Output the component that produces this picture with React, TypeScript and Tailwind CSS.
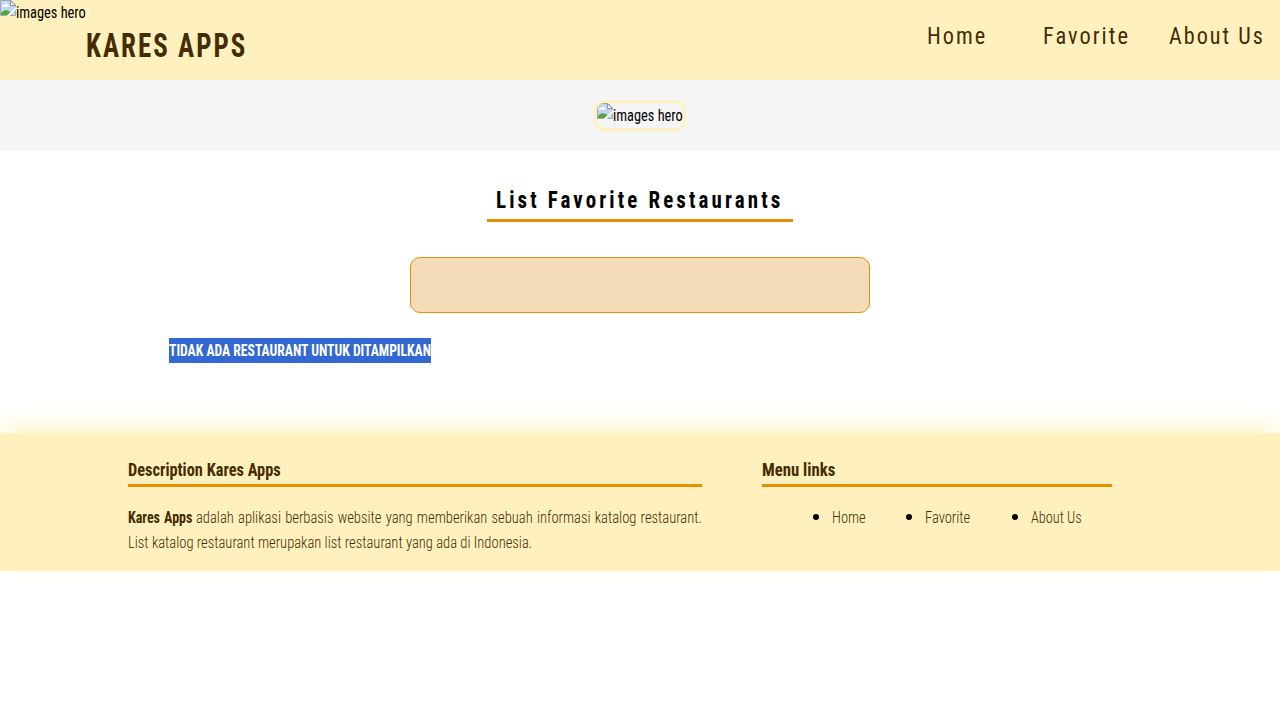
import { useLayoutEffect, useRef, useState } from "react";

type FitProps = { text: string; width: number; className?: string };

/* Condenses a single line of text horizontally to a fixed advance width. */
function Fit({ text, width, className = "" }: FitProps) {
  const ref = useRef<HTMLSpanElement>(null);
  const [scale, setScale] = useState(1);
  useLayoutEffect(() => {
    if (ref.current) setScale(width / ref.current.offsetWidth);
  }, [text, width]);
  return (
    <span className="inline-block shrink-0 whitespace-nowrap text-left align-top" style={{ width }}>
      <span
        ref={ref}
        className={`inline-block origin-left align-top whitespace-nowrap ${className}`}
        style={{ transform: `scaleX(${scale})` }}
      >
        {text}
      </span>
    </span>
  );
}

function BrokenImage() {
  return (
    <span className="flex h-[25px] items-start">
      <svg width="16" height="16" viewBox="0 0 16 16" className="shrink-0">
        <path d="M0.5 0.5H11L15.5 5V9L8 15.5H0.5Z" fill="#c3d5f5" />
        <path d="M2 6.5C2 4.8 4 4.8 4.3 5C4.7 3 7.4 3 7.6 5C9 5 9 6.8 8 6.8H2Z" fill="#fff" />
        <path d="M1 15V13C3 10 7 9 10.5 12L7.5 15Z" fill="#4fa83a" />
        <path d="M0.5 15.5V0.5H11L15.5 5V7.5M0.5 15.5H7" fill="none" stroke="#a3a7ad" />
        <path d="M10.5 0.5V5.5H15.5Z" fill="#f5f5f5" stroke="#8f9398" />
        <path d="M15.5 10V15.5H10Z" fill="#c3d5f5" stroke="#a3a7ad" />
        <path d="M16 7L7 16H9.5L16 9.8Z" fill="#fff" />
      </svg>
      <Fit text="images hero" width={70} className="font-normal" />
    </span>
  );
}

const footerLinks = [
  { text: "Home", width: 33.5, className: "ml-[51px]" },
  { text: "Favorite", width: 45.5, className: "ml-[40.5px]" },
  { text: "About Us", width: 51, className: "ml-[41.5px]" },
];

export default function App() {
  return (
    <div className="min-h-screen bg-white font-['Roboto','Liberation_Sans',sans-serif] text-[16px] leading-[25px] text-black [font-stretch:75%]">
      <header className="flex h-20 items-start bg-[#fff1bd] text-[#442c04]">
        <span className="text-black">
          <BrokenImage />
        </span>
        <h1 className="pt-[21px] text-[33px] leading-[50px]">
          <Fit text="KARES APPS" width={161.5} className="font-bold tracking-[2.5px]" />
        </h1>
        <nav className="ml-auto flex pt-[17px] pr-[15px] text-[24.5px] leading-[38px]">
          <Fit text="Home" width={60} className="tracking-[2.2px]" />
          <span className="ml-[56px] flex">
            <Fit text="Favorite" width={87} className="tracking-[2.2px]" />
          </span>
          <span className="ml-[39px] flex">
            <Fit text="About Us" width={96} className="tracking-[2.2px]" />
          </span>
        </nav>
      </header>

      <section className="flex h-[71px] items-center justify-center bg-[#f5f5f5]">
        <div className="overflow-hidden rounded-[10px] border-[3px] border-[#fff1bd]">
          <BrokenImage />
        </div>
      </section>

      <main className="h-[282px] pt-[30px]">
        <h2 className="mx-auto h-[41px] w-[306px] border-b-[3px] border-[#e89005] pl-[9px] text-[24px] leading-[39px]">
          <Fit text="List Favorite Restaurants" width={287} className="font-bold tracking-[3.6px]" />
        </h2>
        <div className="mx-auto mt-[35px] h-14 w-[460px] rounded-[10px] border border-[#e89005] bg-[#f5dcb9]" />
        <div className="mt-[25px] ml-[169px] flex h-[25px] w-[262px] bg-[#3367d1] text-white">
          <Fit text="TIDAK ADA RESTAURANT UNTUK DITAMPILKAN" width={262} className="font-bold" />
        </div>
      </main>

      <footer className="flex h-[138px] gap-[60px] bg-[#fff1bd] px-32 pt-[22px] text-[#442c04] shadow-[0_-10px_25px_-5px_#fff1bd]">
        <section className="w-[574px]">
          <h3 className="h-8 border-b-[3px] border-[#e89005] text-[18.7px] leading-[31px]">
            <Fit text="Description Kares Apps" width={153} className="font-bold" />
          </h3>
          <div className="mt-[18px]">
            <p className="flex justify-between">
              <Fit text="Kares Apps" width={64} className="font-bold [word-spacing:1px]" />
              <Fit
                text="adalah aplikasi berbasis website yang memberikan sebuah informasi katalog restaurant."
                width={506}
                className="font-light [word-spacing:1px]"
              />
            </p>
            <p className="flex">
              <Fit
                text="List katalog restaurant merupakan list restaurant yang ada di Indonesia."
                width={404.5}
                className="font-light"
              />
            </p>
          </div>
        </section>
        <section className="w-[350px]">
          <h3 className="h-8 border-b-[3px] border-[#e89005] text-[18.7px] leading-[31px]">
            <Fit text="Menu links" width={73.5} className="font-bold" />
          </h3>
          <ul className="mt-[18px] flex">
            {footerLinks.map((link) => (
              <li key={link.text} className={`flex items-start ${link.className}`}>
                <span className="mt-[9px] mr-[13px] size-1.5 rounded-full bg-black" />
                <Fit text={link.text} width={link.width} className="font-light" />
              </li>
            ))}
          </ul>
        </section>
      </footer>
    </div>
  );
}
